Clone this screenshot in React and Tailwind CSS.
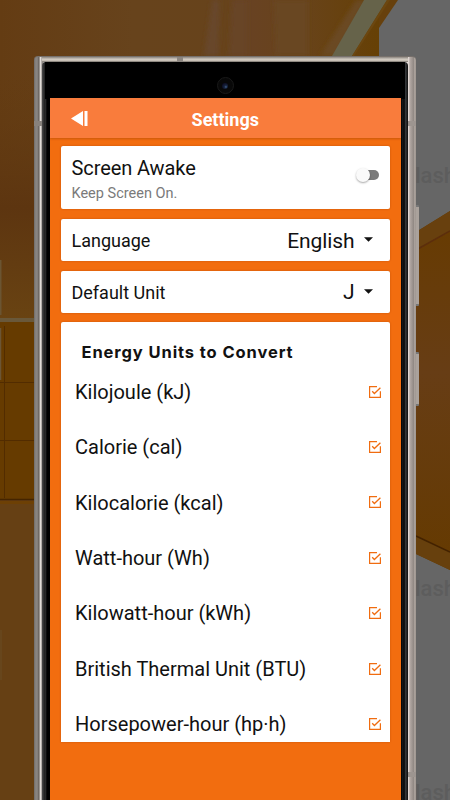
const units = [
  'Kilojoule (kJ)',
  'Calorie (cal)',
  'Kilocalorie (kcal)',
  'Watt-hour (Wh)',
  'Kilowatt-hour (kWh)',
  'British Thermal Unit (BTU)',
  'Horsepower-hour (hp·h)',
];

function CheckIcon() {
  return (
    <svg className="mt-[-1px] h-3 w-3 shrink-0" viewBox="0 0 12 12" fill="none" stroke="#f06c10">
      <path d="M8 .6H.6v10.8h10.8V5.2" strokeWidth="1.2" />
      <path d="M3.2 5.3 5.4 7.5 11.4 1.7" strokeWidth="1.3" />
    </svg>
  );
}

function Caret() {
  return (
    <svg className="h-[5px] w-[9px]" viewBox="0 0 9 5">
      <path d="M0 .3h9L4.500 4.800z" fill="#111" />
    </svg>
  );
}

function SelectCard({ label, value }) {
  return (
    <div className="flex h-[42.3px] items-center rounded-[2px] bg-white pl-[10.500px] pr-[17.500px] shadow-[0_0_2px_rgba(120,40,0,0.4)]">
      <span className="flex-1 pt-[1px] text-[18px]">{label}</span>
      <span className="mr-[9px] pt-[3px] text-[21px] tracking-[-0.1px]">{value}</span>
      <Caret />
    </div>
  );
}

// Dimmed kitchen photo behind the phone
function Backdrop() {
  return (
    <svg className="absolute inset-0 h-[800px] w-[450px]" viewBox="0 0 450 800">
      <defs>
        <linearGradient id="wall" x1="0" x2="1">
          <stop offset="0" stopColor="#643c13" />
          <stop offset=".35" stopColor="#67431c" />
          <stop offset=".6" stopColor="#67431b" />
          <stop offset=".66" stopColor="#684222" />
          <stop offset=".8" stopColor="#68431a" />
          <stop offset="1" stopColor="#664005" />
        </linearGradient>
        <linearGradient id="leftWall" x1="0" y1="0" x2="0" y2="1">
          <stop offset="0" stopColor="#643c11" stopOpacity="0" />
          <stop offset=".55" stopColor="#5d3510" />
          <stop offset="1" stopColor="#694312" />
        </linearGradient>
        <linearGradient id="cabinet" x1="0" y1="0" x2="0" y2="1">
          <stop offset="0" stopColor="#673b00" />
          <stop offset=".45" stopColor="#673d15" />
          <stop offset="1" stopColor="#653a00" />
        </linearGradient>
        <filter id="soft" x="-50%" y="-20%" width="200%" height="140%">
          <feGaussianBlur stdDeviation="2" />
        </filter>
      </defs>
      <rect width="450" height="800" fill="#666" />
      <rect width="379" height="800" fill="url(#wall)" />
      <path d="M378 0h20l-19 28z" fill="#67400c" />
      <g filter="url(#soft)">
        <path d="M212 0h8l-2 56h-14z" fill="#67462c" />
        <path d="M232 0h15v56h-18z" fill="#674425" />
        <path d="M274 0h34v56h-32z" fill="#694624" />
        <path d="M356 0h10l-30 56h-16z" fill="#6b4a22" />
      </g>
      <path d="M364 0h23l-35 56h-20z" fill="#66634a" />
      <path d="M387 0h3l-36 56h-2z" fill="#6c4710" />
      <rect y="70" width="34" height="250" fill="url(#leftWall)" />
      <rect y="260" width="1.5" height="55" fill="#6b5532" />
      <rect y="318" width="34" height="4" fill="#69583a" />
      <rect y="322" width="34" height="178" fill="#663b00" />
      <path d="M4.5 326v172M0 382.500h34M0 440.500h34" stroke="#522c00" />
      <path d="M.5 328v52" stroke="#6b5535" strokeWidth="1.500" />
      <path d="M0 499.500h34" stroke="#442400" strokeWidth="1.500" />
      <rect y="501" width="34" height="299" fill="#664014" />
      <path d="M0 501h34v3H0z" fill="#6d4005" />
      <path d="M0 630h2v50H0z" fill="#67461c" />
      {/* cabinet on the right */}
      <path d="M416 232 450 211V570L416 554z" fill="url(#cabinet)" />
      <path d="M416 232 450 211V231L416 250z" fill="#68400e" />
      <path d="M416 250 450 231" stroke="#5c2e0c" strokeWidth="1.500" />
      <path d="M416 536 450 552V570L416 554z" fill="#67400d" />
      <path d="M416 536 450 552" stroke="#432200" strokeWidth="1.500" />
      <g fill="#5d5d5d" fontFamily="Roboto, sans-serif" fontSize="22" fontWeight="500">
        <text x="415" y="183">lash</text>
        <text x="415" y="596">lash</text>
        <text x="415" y="800">lash</text>
      </g>
    </svg>
  );
}

export default function App() {
  return (
    <div className="relative h-[800px] w-[450px] overflow-hidden bg-[#666] font-['Roboto',sans-serif] text-[#111]">
      <Backdrop />

      {/* side buttons */}
      <div className="absolute left-[415px] top-[205px] h-[101px] w-[3.500px] rounded-r-[1px] border-y-2 border-[#777] bg-[#aaa29c]" />
      <div className="absolute left-[415px] top-[352px] h-[54px] w-[3.500px] rounded-r-[1px] border-y-2 border-[#777] bg-[#aaa29c]" />

      <div className="relative ml-[34px] mt-[56px] h-[744px] w-[382px] rounded-t-[4px] border-t border-[#77716c] bg-[linear-gradient(90deg,#6f6b68_0px,#8b8784_2px,#817c78_4px,#5d5753_5px,#d5d0cb_6px,#eee9e4_7px,#77716d_8px,#d5d0cb_10px,#d5d0cb_372px,#eee5e1_374px,#b2a8a3_376px,#8e8681_380px,#c4bab3_381px,#817a75_382px)]">
        {/* antenna breaks */}
        <div className="absolute left-0 top-[64px] h-[5px] w-[8px] bg-[#88827d]" />
        <div className="absolute right-0 top-[64px] h-[5px] w-[8px] bg-[#9d9590]" />
        <div className="absolute right-0 top-[715px] h-[5px] w-[8px] bg-[#9d9590]" />
        <div className="absolute left-[8px] right-[8px] top-0 h-[5px] bg-[linear-gradient(180deg,#8c8680,#d2cbc1_45%,#c2bab0_80%,#5c5853)]" />
        <div className="absolute left-[143px] top-0 h-[5px] w-[6px] bg-[#8c8680]" />

        <div className="relative ml-[8px] mr-[8px] mt-[5px] h-[738px] rounded-t-[4px] bg-[linear-gradient(90deg,#302f2f_0px,#555_1px,#111_2px,#353535_3px,#000_5px,#000_359px,#1c1d1e_361px,#000_362px,#44474a_364px,#090909_365px,#222_366px)] pl-[8px] pr-[7.500px]">
          <div className="absolute left-[3px] right-[3px] top-0 h-[37px] bg-black" />
          <div className="relative flex h-[36px] items-center justify-center pt-[11px]">
            <div className="flex h-[17px] w-[17px] items-center justify-center rounded-full border border-[#191919] bg-[#080808]">
              <div className="h-[6px] w-[6px] rounded-full bg-[radial-gradient(circle_at_65%_65%,#41618a_0,#17233c_30%,#0b0a20_80%)]" />
            </div>
          </div>

          <div className="relative flex h-[702px] flex-col overflow-hidden bg-[#f26d0f]">
            <header className="relative flex h-[40px] shrink-0 items-center justify-center bg-[#f97c3c] pt-[2px] shadow-[0_1px_2px_rgba(110,40,0,0.3)]">
              <svg className="absolute left-[21px] top-[13px] h-[15px] w-[17px]" viewBox="0 0 17 15" fill="white">
                <path d="M0 7.500 12 0v15zM13.500 0h3v15h-3z" />
              </svg>
              <h1 className="text-[18px] font-bold text-white">Settings</h1>
            </header>

            <main className="flex flex-col gap-[9.500px] pl-[11px] pr-[10.500px] pt-[8px]">
              <div className="flex h-[63.300px] items-center rounded-[2px] bg-white pl-[10.500px] pr-[11px] shadow-[0_0_2px_rgba(120,40,0,0.4)]">
                <div className="flex-1">
                  <div className="pt-[5px] text-[20px] leading-[25px] tracking-[-0.1px]">Screen Awake</div>
                  <div className="pt-[2px] text-[14.500px] leading-[22px] text-[#7a7a7a]">Keep Screen On.</div>
                </div>
                <div className="relative mt-[-6px] h-[10px] w-[21px] rounded-full bg-[#7b7b7b]">
                  <div className="absolute left-[-2px] top-[-2px] h-[14px] w-[14px] rounded-full bg-[#fafafa] shadow-[0_1px_2px_rgba(0,0,0,0.35)]" />
                </div>
              </div>

              <SelectCard label="Language" value="English" />
              <SelectCard label="Default Unit" value="J" />

              <div className="h-[420px] overflow-hidden rounded-t-[2px] bg-white pl-[14px] pr-[9px] shadow-[0_0_2px_rgba(120,40,0,0.4)]">
                <h2 className="ml-[6.500px] flex h-[42px] items-end font-['Inter',sans-serif] text-[16.500px] font-bold leading-[24px] tracking-[0.9px]">
                  Energy Units to Convert
                </h2>
                {units.map(unit => (
                  <div key={unit} className="flex h-[55.400px] items-center justify-between">
                    <span className="pb-[0.500px] text-[20px]">{unit}</span>
                    <CheckIcon />
                  </div>
                ))}
              </div>
            </main>
          </div>
        </div>
      </div>
    </div>
  );
}
